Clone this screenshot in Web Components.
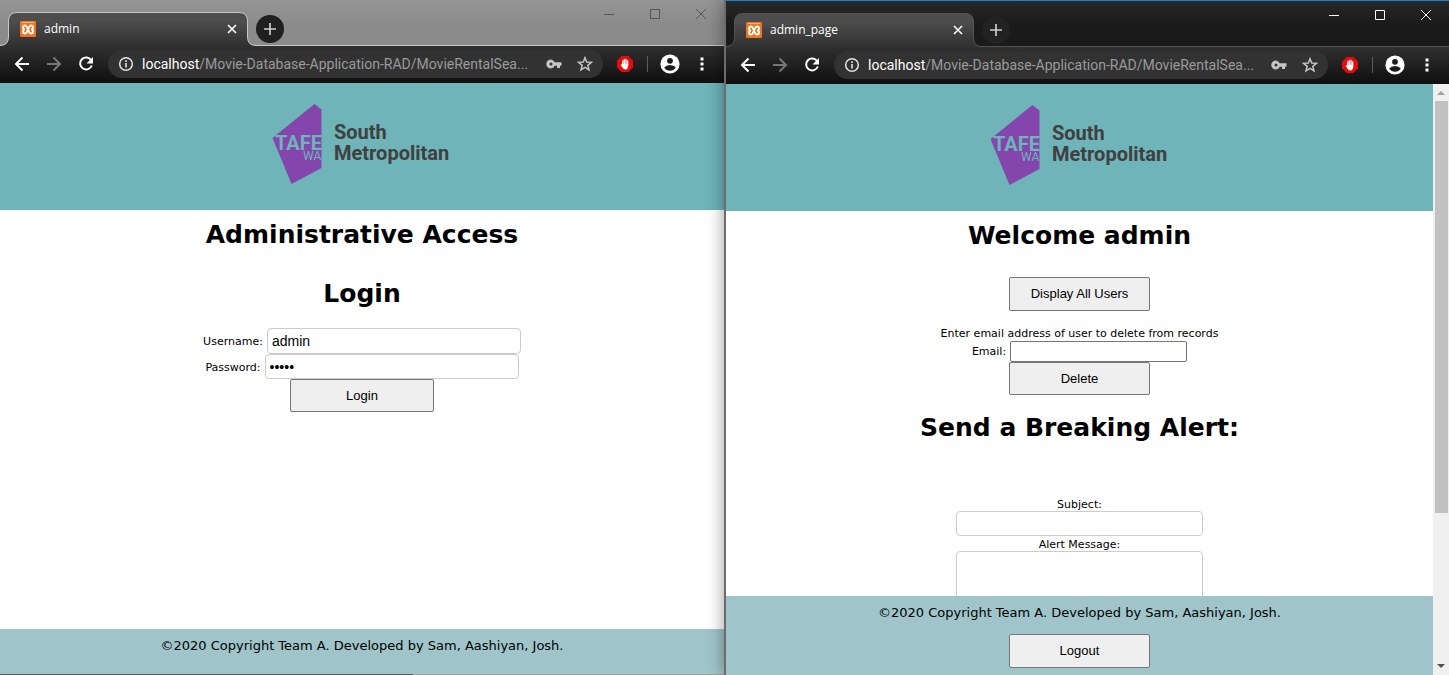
<!DOCTYPE html>
<html lang="en">
<head>
<meta charset="utf-8">
<title>admin</title>
<style>
  html, body { height: 100%; margin: 0; }
  body { overflow: hidden; font-family: "DejaVu Sans", Verdana, sans-serif; color: #000; }
</style>
</head>
<body>
<desk-top>
  <browser-window tab="admin" inactive><login-page></login-page></browser-window>
  <browser-window tab="admin_page" scrollable><admin-page></admin-page></browser-window>
</desk-top>

<script>
function define(name, html, init) {
  const template = document.createElement('template');
  template.innerHTML = html;
  customElements.define(name, class extends HTMLElement {
    constructor() {
      super();
      this.attachShadow({ mode: 'open' }).append(template.content.cloneNode(true));
    }
    connectedCallback() { if (init) init(this, this.shadowRoot); }
  });
}

define('desk-top', `
<style>
  :host { display: flex; height: 100vh; overflow: hidden; background: #fff; }
  ::slotted(:first-child) { flex: 1 1 724px; }
  ::slotted(:last-child) { flex: 1 1 725px; box-sizing: border-box; }
</style>
<slot></slot>`);

define('browser-window', `
<style>
  :host {
    --line: #545454; --frame-top: #282828; --frame: #1a1a1a; --control: #fff; --plus-bg: #222;
    display: flex; flex-direction: column; position: relative; min-width: 0; min-height: 0;
    border-left: 2px solid #6c6c6c; border-top: 1px solid #1a80d0; background: #fff;
    box-shadow: 0 0 16px rgba(0,0,0,.4);
  }
  :host([inactive]) {
    --line: #c6c6c6; --frame-top: #959595; --frame: #8b8b8b; --control: #555; --plus-bg: #202020;
    border: 0; box-shadow: none;
  }
  button { border: 0; padding: 0; background: none; color: inherit; display: grid; place-items: center; }
  svg { display: block; }
  .titlebar {
    display: flex; height: 45px; border-bottom: 1px solid var(--line);
    background: linear-gradient(var(--frame-top), var(--frame) 24px);
  }
  .tab {
    position: relative; box-sizing: border-box; flex: none; width: 256px; height: 46px;
    padding: 12px 16px 0 20px; display: flex; align-items: center; gap: 8px;
    font: 12px/16px "Open Sans", "Segoe UI", sans-serif; color: #fff;
  }
  .tab > * { position: relative; }
  .tab .shape { position: absolute; left: 0; top: 0; }
  .tab .name { flex: 1; }
  .tab button { width: 16px; height: 16px; }
  .new { width: 28px; height: 28px; margin-top: 15px; border-radius: 14px; background: var(--plus-bg); color: #ccc; }
  .controls { margin-left: auto; display: flex; color: var(--control); }
  .controls button { width: 46px; height: 28px; }
  .toolbar {
    box-sizing: border-box; height: 37px; padding: 4px 20px 5px 14px; display: flex; align-items: center;
    background: linear-gradient(#303030, #0f0f0f); color: #fff;
  }
  .nav { display: flex; gap: 16px; margin-right: 14px; }
  .address {
    flex: 1; min-width: 0; height: 28px; box-sizing: border-box; padding: 0 9px 0 10px; border-radius: 14px;
    background: #323232; display: flex; align-items: center; color: #ccc;
  }
  .url {
    flex: 1; min-width: 0; margin: 0 12px 0 8px; white-space: nowrap; color: #9a9a9a;
    font: 14px/20px Roboto, "Segoe UI", sans-serif;
  }
  .url b { font-weight: 400; color: #fff; }
  .address button + button { margin-left: 14px; }
  .tools { display: flex; align-items: center; }
  .block { margin: 0 14px; }
  .rule { width: 1px; height: 16px; background: #5c5c5c; }
  .user { margin: 0 20px 0 12px; }
  .view { flex: 1; min-height: 0; display: flex; }
  ::slotted(*) { flex: 1; min-width: 0; min-height: 0; }
  .bar { display: none; width: 16px; background: #f0f0f0; flex-direction: column; align-items: center; }
  :host([scrollable]) .bar { display: flex; }
  .bar svg { flex: none; }
  .track { flex: 1; display: flex; flex-direction: column; }
  .thumb { width: 13px; height: 74%; background: #c1c1c1; margin-left: 1px; }
  .edge { display: none; height: 1px; background: linear-gradient(90deg, #5c5c5c 57%, #a2a2a2 57%); }
  :host([inactive]) .edge { display: block; }
</style>
<div class="titlebar">
  <div class="tab">
    <svg class="shape" width="256" height="46" viewBox="0 0 256 46">
      <defs><linearGradient id="g" x1="0" y1="0" x2="0" y2="1"><stop offset=".26" stop-color="#4d4d4d"/><stop offset="1" stop-color="#303030"/></linearGradient></defs>
      <path fill="url(#g)" d="M0 46V45.5Q8.500 45.500 8.500 37V21Q8.500 12.500 17 12.500H239Q247.500 12.500 247.500 21V37Q247.500 45.500 256 45.500V46Z"/>
      <path fill="none" stroke="var(--line)" d="M0 45.500Q8.500 45.500 8.500 37V21Q8.500 12.500 17 12.500H239Q247.500 12.500 247.500 21V37Q247.500 45.500 256 45.500"/>
    </svg>
    <svg width="16" height="16" viewBox="0 0 16 16"><rect width="16" height="16" rx="1" fill="#ee7420"/><path d="M2 1.500H14" stroke="#f9b27a"/><path d="M8 8.500L6.800 5.800Q6.300 4.500 5 4.500Q3 4.500 3 6.500Q3 8.500 5 8.500Q3 8.500 3 10.500Q3 12.500 5 12.500Q6.300 12.500 6.800 11.200L9.200 5.800Q9.700 4.500 11 4.500Q13 4.500 13 6.500Q13 8.500 11 8.500Q13 8.500 13 10.500Q13 12.500 11 12.500Q9.700 12.500 9.200 11.200Z" fill="none" stroke="#fff" stroke-width="1.800"/></svg>
    <span class="name"></span>
    <button aria-label="Close tab"><svg width="10" height="10" viewBox="0 0 10 10"><path d="M1 1L9 9M9 1L1 9" stroke="#fff" stroke-width="1.600"/></svg></button>
  </div>
  <button class="new" aria-label="New tab"><svg width="12" height="12" viewBox="0 0 12 12"><path d="M6 0V12M0 6H12" stroke="currentColor" stroke-width="1.700"/></svg></button>
  <div class="controls">
    <button aria-label="Minimize"><svg width="10" height="11" viewBox="0 0 10 11"><path d="M0 5.500H10" stroke="currentColor"/></svg></button>
    <button aria-label="Maximize"><svg width="10" height="10" viewBox="0 0 10 10"><path d="M.5 .5H9.500V9.500H.5Z" fill="none" stroke="currentColor"/></svg></button>
    <button aria-label="Close"><svg width="10" height="10" viewBox="0 0 10 10"><path d="M0 0L10 10M10 0L0 10" stroke="currentColor"/></svg></button>
  </div>
</div>
<div class="toolbar">
  <div class="nav">
    <button aria-label="Back"><svg width="16" height="16" viewBox="0 0 16 16"><path d="M15 8H2M8.500 1.500L2 8L8.500 14.500" fill="none" stroke="#fff" stroke-width="2"/></svg></button>
    <button aria-label="Forward" disabled><svg width="16" height="16" viewBox="0 0 16 16"><path d="M1 8H14M7.500 1.500L14 8L7.500 14.500" fill="none" stroke="#777" stroke-width="2"/></svg></button>
    <button aria-label="Reload"><svg width="16" height="16" viewBox="0 0 16 16"><path d="M13.200 4.200A6 6 0 1 0 13.800 9.500" fill="none" stroke="#fff" stroke-width="2"/><path d="M15 1V7.500H8.500Z" fill="#fff"/></svg></button>
  </div>
  <div class="address">
    <svg width="16" height="16" viewBox="0 0 16 16"><circle cx="8" cy="8" r="6.300" fill="none" stroke="#e4e4e4" stroke-width="1.500"/><path d="M8 7V11.500M8 4.300V6" stroke="#e4e4e4" stroke-width="1.600"/></svg>
    <div class="url"><b>localhost</b>/Movie-Database-Application-RAD/MovieRentalSea...</div>
    <button aria-label="Saved passwords"><svg width="16" height="16" viewBox="0 0 16 16"><path fill="#c4c4c4" fill-rule="evenodd" d="M8.700 6.300A4.400 4.400 0 1 0 8.700 9.700H11V12H14V9.700H15.500V6.300ZM5 6.500A1.500 1.500 0 1 1 5 9.500A1.500 1.500 0 1 1 5 6.500Z"/></svg></button>
    <button aria-label="Bookmark"><svg width="18" height="18" viewBox="0 0 18 18"><path fill="none" stroke="#c4c4c4" stroke-width="1.500" d="M9 2.800L10.700 7L15.400 7.300L11.800 10.300L13 14.900L9 12.400L5 14.900L6.200 10.300L2.600 7.300L7.300 7Z"/></svg></button>
  </div>
  <div class="tools">
    <button class="block" aria-label="Ad blocker"><svg width="16" height="16" viewBox="0 0 16 16"><path fill="#e60c0c" d="M4.700 0H11.300L16 4.700V11.300L11.300 16H4.700L0 11.300V4.700Z"/><path d="M5.700 5V9M7.300 3.500V8M9 3.500V8M10.600 5V9" stroke="#fff" stroke-width="1.300" stroke-linecap="round"/><path fill="#fff" d="M5 8L11.200 7.500V10.500Q10.500 13.500 8.500 13.500Q6.500 13.500 5.500 11.500L3.500 9L4.500 8.500Z"/></svg></button>
    <span class="rule"></span>
    <button class="user" aria-label="Profile"><svg width="20" height="20" viewBox="0 0 20 20"><circle cx="10" cy="10" r="9.600" fill="#fff"/><circle cx="10" cy="6.800" r="2.900" fill="#1c1c1c"/><path fill="#1c1c1c" d="M4.200 13.500Q6 11 10 11Q14 11 15.800 13.500Q13.600 16.800 10 16.800Q6.400 16.800 4.200 13.500Z"/></svg></button>
    <button aria-label="Menu"><svg width="4" height="14" viewBox="0 0 4 14"><path fill="#fff" d="M.5 .5h3v3h-3zM.5 5.500h3v3h-3zM.5 10.500h3v3h-3z"/></svg></button>
  </div>
</div>
<div class="view">
  <slot></slot>
  <div class="bar">
    <svg width="16" height="17" viewBox="0 0 16 17"><path fill="#a3a3a3" d="M4 11L8 7L12 11Z"/></svg>
    <div class="track"><div class="thumb"></div></div>
    <svg width="16" height="17" viewBox="0 0 16 17"><path fill="#505050" d="M4 6L8 10L12 6Z"/></svg>
  </div>
</div>
<div class="edge"></div>`, (host, root) => {
  root.querySelector('.name').textContent = host.getAttribute('tab');
});

define('site-header', `
<style>
  :host { display: flex; justify-content: center; box-sizing: border-box; height: 127px; padding-top: 20px; background: #6eb4b9; flex: none; }
  svg { display: block; }
  text { font-family: Roboto, sans-serif; }
</style>
<svg width="180" height="82" viewBox="0 0 180 82" role="img" aria-label="TAFE WA South Metropolitan">
  <path fill="#8446ac" d="M.5 35L42.500 1L49.500 6.500V65L19.500 81Z"/>
  <text x="3" y="47" font-size="20" font-weight="700" fill="#6eb4b9">TAFE</text>
  <text x="31" y="57" font-size="12" fill="#6eb4b9">WA</text>
  <g fill="#404040" font-size="20" font-weight="700"><text x="62" y="36">South</text><text x="62" y="57">Metropolitan</text></g>
</svg>`);

define('site-footer', `
<style>
  :host { display: flex; flex-direction: column; align-items: center; gap: 13px; flex: none; background: #9fc5ca; padding: 9px 0 7px; font-size: 13px; line-height: 16px; }
  p { margin: 0; }
</style>
<p>©2020 Copyright Team A. Developed by Sam, Aashiyan, Josh.</p>
<slot></slot>`);

const pageStyle = `
  :host { display: flex; flex-direction: column; background: #fff; font-size: 11px; line-height: 14px; }
  main { flex: 1; min-height: 0; overflow: hidden; display: flex; flex-direction: column; align-items: center; padding-top: 9px; }
  h1 { margin: 0; font-size: 25px; line-height: 32px; font-weight: 700; white-space: nowrap; }
  p { margin: 0; }
  form { display: flex; flex-direction: column; align-items: center; }
  .row { display: flex; align-items: center; gap: 4px; }
  label { padding-top: 1px; }
  input, textarea { box-sizing: border-box; font: 14px/17px "Liberation Sans", Arial, sans-serif; color: #000; background: #fff; border: 1px solid #ccc; border-radius: 4px; padding: 3px 4px; margin: 0; height: 25px; }
  button { box-sizing: border-box; width: 141px; height: 34px; padding: 0; border: 1px solid #767676; border-radius: 2px; background: #efefef; color: #000; font: 13px/16px "Liberation Sans", Arial, sans-serif; }
`;

define('login-page', `
<style>${pageStyle}
  h1 + h1 { margin-top: 27px; }
  form { margin-top: 18px; }
  input { width: 254px; }
  label { padding-top: 2px; }
  #user { height: 26px; }
  button { width: 144px; height: 33px; }
  site-footer { padding-bottom: 20px; }
</style>
<site-header></site-header>
<main>
  <h1>Administrative Access</h1>
  <h1>Login</h1>
  <form>
    <div class="row"><label for="user">Username:</label><input id="user" type="text" value="admin"></div>
    <div class="row"><label for="pass">Password:</label><input id="pass" type="password" value="admin"></div>
    <button type="button">Login</button>
  </form>
</main>
<site-footer></site-footer>`);

define('admin-page', `
<style>${pageStyle}
  .users { margin: 25px 0 16px; flex: none; }
  .row input { width: 177px; height: 21px; border-color: #767676; border-radius: 2px; }
  .row + button { height: 33px; }
  h1 + form { margin-top: 53px; }
  form + h1 { margin-top: 17px; }
  .alert input, textarea { width: 247px; }
  .alert label { line-height: 13px; }
  .alert input { margin-bottom: 1px; }
  textarea { height: 120px; resize: none; }
</style>
<site-header></site-header>
<main>
  <h1>Welcome admin</h1>
  <button class="users" type="button">Display All Users</button>
  <form>
    <p>Enter email address of user to delete from records</p>
    <div class="row"><label for="email">Email:</label><input id="email" type="text"></div>
    <button type="button">Delete</button>
  </form>
  <h1>Send a Breaking Alert:</h1>
  <form class="alert">
    <label for="subject">Subject:</label>
    <input id="subject" type="text">
    <label for="message">Alert Message:</label>
    <textarea id="message"></textarea>
  </form>
</main>
<site-footer><button type="button">Logout</button></site-footer>`);
</script>
</body>
</html>
